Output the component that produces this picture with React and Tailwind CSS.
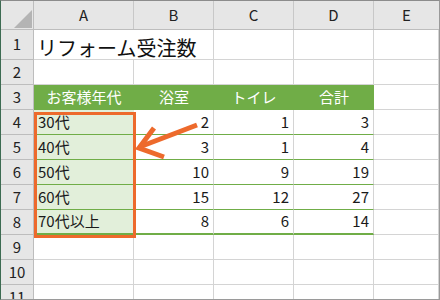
import React from "react";

const cols = [
  { k: "A", w: "w-[100px]" },
  { k: "B", w: "w-[80px]" },
  { k: "C", w: "w-[80px]" },
  { k: "D", w: "w-[80px]" },
  { k: "E", w: "flex-1" },
];

const rows = [
  { n: 1, h: "h-[30px]", cells: [{ t: "リフォーム受注数", title: true }, {}, {}, {}, {}] },
  { n: 2, h: "h-[25px]", cells: [{}, {}, {}, {}, {}] },
  { n: 3, h: "h-[25px]", head: true, cells: [{ t: "お客様年代" }, { t: "浴室" }, { t: "トイレ" }, { t: "合計" }, {}] },
  { n: 4, h: "h-[25px]", data: true, cells: [{ t: "30代" }, { t: "2" }, { t: "1" }, { t: "3" }, {}] },
  { n: 5, h: "h-[25px]", data: true, cells: [{ t: "40代" }, { t: "3" }, { t: "1" }, { t: "4" }, {}] },
  { n: 6, h: "h-[25px]", data: true, cells: [{ t: "50代" }, { t: "10" }, { t: "9" }, { t: "19" }, {}] },
  { n: 7, h: "h-[25px]", data: true, cells: [{ t: "60代" }, { t: "15" }, { t: "12" }, { t: "27" }, {}] },
  { n: 8, h: "h-[25px]", data: true, last: true, cells: [{ t: "70代以上" }, { t: "8" }, { t: "6" }, { t: "14" }, {}] },
  { n: 9, h: "h-[25px]", cells: [{}, {}, {}, {}, {}] },
  { n: 10, h: "h-[25px]", cells: [{}, {}, {}, {}, {}] },
  { n: 11, h: "h-[25px]", cells: [{}, {}, {}, {}, {}] },
];

function Cell({ row, c, i }) {
  const w = cols[i].w;
  if (row.head && i < 4) {
    return (
      <div className={`${w} h-full bg-[#70ad47] text-white flex items-center justify-center text-[15px] shrink-0`}>
        {c.t}
      </div>
    );
  }
  if (row.data && i < 4) {
    const bb = row.last ? "border-b-2" : "border-b";
    if (i === 0) {
      return (
        <div className={`${w} h-full bg-[#e2efda] ${bb} border-[#70ad47] flex items-center pl-[4px] text-[15px] shrink-0`}>
          {c.t}
        </div>
      );
    }
    return (
      <div className={`${w} h-full ${bb} border-b-[#70ad47] border-r border-r-[#d4d4d4] flex items-center justify-end pr-[4px] text-[15px] shrink-0`}>
        {c.t}
      </div>
    );
  }
  const noRight = c.title;
  return (
    <div className={`${w} h-full border-b border-[#d4d4d4] ${noRight ? "" : "border-r"} relative shrink-0 ${i === 4 ? "" : ""}`}>
      {c.title && (
        <span className="absolute left-[3px] top-[3px] text-[20px] whitespace-nowrap text-[#111]">{c.t}</span>
      )}
    </div>
  );
}

export default function App() {
  return (
    <div
      className="w-[440px] h-[300px] overflow-hidden bg-white relative border-t border-r border-b border-t-[#8c8c8c] border-r-[#9a9a9a] border-b-[#9a9a9a] border-l border-l-[#3d6b52] text-[#1a1a1a]"
      style={{ fontFamily: '"Noto Sans CJK JP", "Noto Sans", sans-serif' }}
    >
      {/* column header */}
      <div className="flex h-[29px] bg-[#e6e6e6] border-b border-[#bdbdbd]">
        <div className="w-[33px] h-full border-r border-[#bdbdbd] relative shrink-0">
          <svg className="absolute left-[13px] top-[9px]" width="18" height="18" viewBox="0 0 18 18">
            <polygon points="18,0 18,18 0,18" fill="#b4b4b4" />
          </svg>
        </div>
        {cols.map((c, i) => (
          <div
            key={c.k}
            className={`${c.w} h-full flex items-center justify-center text-[15px] text-[#222] shrink-0 ${i < 4 ? "border-r border-[#c8c8c8]" : ""}`}
          >
            {c.k}
          </div>
        ))}
      </div>
      {rows.map((row) => (
        <div key={row.n} className={`flex ${row.h}`}>
          <div className="w-[33px] h-full bg-[#e6e6e6] border-r border-b border-[#bdbdbd] flex items-center justify-center text-[15px] text-[#222] shrink-0">
            {row.n}
          </div>
          {row.cells.map((c, i) => (
            <Cell key={i} row={row} c={c} i={i} />
          ))}
        </div>
      ))}

      {/* orange highlight rectangle */}
      <div className="absolute left-[33px] top-[111px] w-[102px] h-[126px] border-[3px] border-[#ed6a2c] pointer-events-none" />

      {/* arrow */}
      <svg className="absolute left-0 top-0 pointer-events-none" width="440" height="300" viewBox="0 0 440 300">
        <g transform="translate(-1,-1)" stroke="#ed6a2c" strokeWidth="5" fill="none" strokeLinecap="butt" strokeLinejoin="miter">
          <line x1="197" y1="125" x2="142" y2="146" />
          <polyline points="154,128 139,148 164,157" />
        </g>
      </svg>
    </div>
  );
}
